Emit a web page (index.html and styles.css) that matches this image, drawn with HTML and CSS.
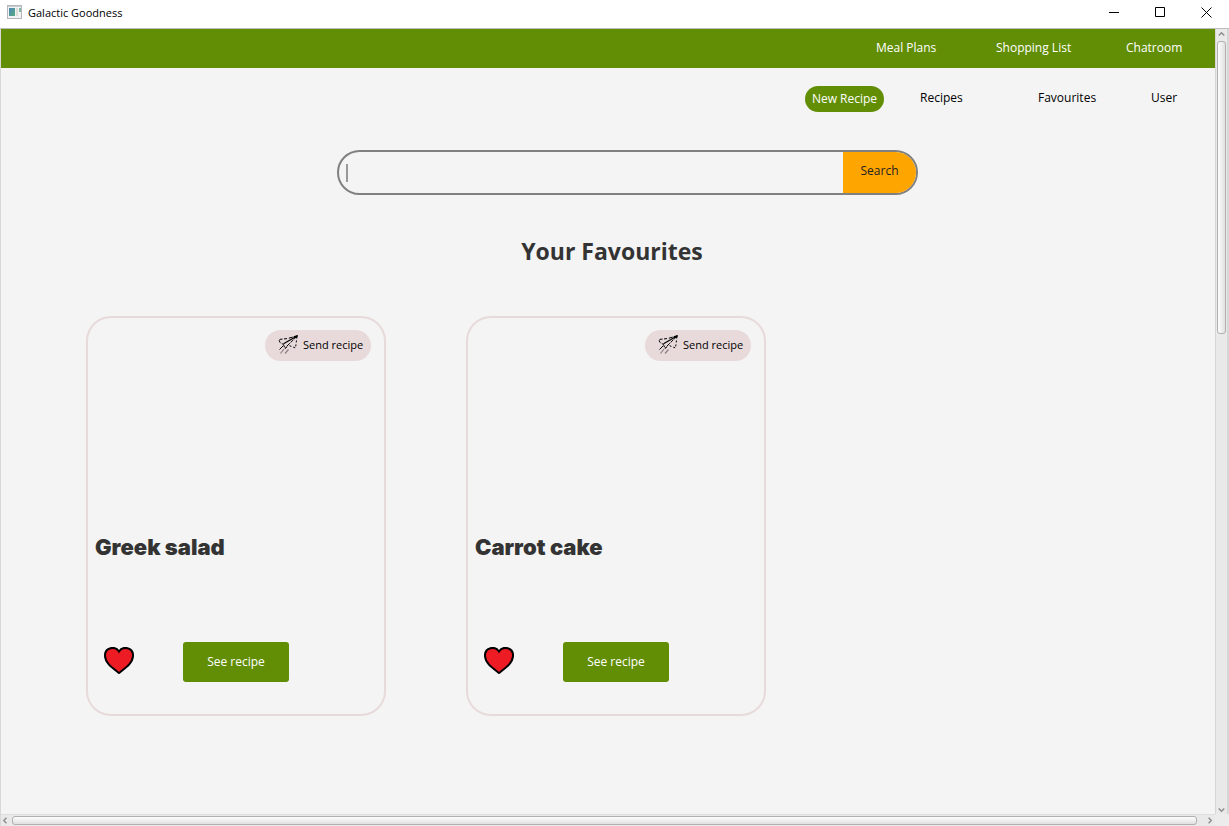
FILE: index.html
```html
<!DOCTYPE html>
<html lang="en">
<head>
<meta charset="utf-8">
<title>Galactic Goodness</title>
<link rel="stylesheet" href="styles.css">
</head>
<body>
<svg class="defs" aria-hidden="true">
  <symbol id="plane" viewBox="0 0 20 20">
    <g fill="none" stroke="#000" stroke-width="1">
      <path d="M19.500 .8L10 3.400" stroke-dasharray="4 1"/>
      <path d="M9 3.600L.8 4.500L2 7.500L5.500 9.500" stroke-dasharray="3 1.500"/>
      <path d="M19.500 .8L5.500 8.800" stroke-width="1.200"/>
      <path d="M5.500 9.500L7 13.500L10 11" stroke-dasharray="3 1"/>
      <path d="M19 1.200L7.500 12.500" stroke-dasharray="4 1"/>
      <path d="M19 1.500L17.500 13L11 10.500" stroke-dasharray="2 2"/>
      <path d="M5 11L1.500 14.500"/>
    </g>
    <path d="M15.500 1.200L19.800 .3L18.500 3.200Z"/>
    <path d="M6 14L2.500 18.500M10.500 14.500L7 18.500" fill="none" stroke="#8d7f82" stroke-width="1.200"/>
  </symbol>
  <symbol id="heart" viewBox="0 0 30 27">
    <path d="M15 4.500C12.500 .5 8.500 .7 6.500 1.200C2.500 2.200 .8 5.500 1 9C1.300 16 8 20.500 15 26C22 20.500 28.700 16 29 9C29.200 5.500 27.500 2.200 23.500 1.200C21.500 .7 17.500 .5 15 4.500Z" fill="#ed1c24" stroke="#000" stroke-width="2"/>
  </symbol>
</svg>

<header class="titlebar">
  <svg class="app-icon" viewBox="0 0 15 14" aria-hidden="true">
    <defs><linearGradient id="pane" x2="1" y2="1"><stop stop-color="#4b86b4"/><stop offset="1" stop-color="#58ab82"/></linearGradient></defs>
    <rect x=".5" y=".5" width="14" height="13" fill="#f2f2f2" stroke="#b4b8be"/>
    <rect x="1" y="1" width="13" height="1" fill="#c9cdd2"/>
    <rect x="2" y="3" width="6" height="8" fill="url(#pane)"/>
    <rect x="9" y="3" width="2" height="8" fill="#dcdcdc"/>
    <rect x="12" y="3" width="2" height="4" fill="#86b9a4"/>
  </svg>
  <span class="window-title">Galactic Goodness</span>
  <div class="window-controls">
    <button class="window-button" aria-label="Minimize"><svg viewBox="0 0 11 11"><path d="M0 5.500H10"/></svg></button>
    <button class="window-button" aria-label="Maximize"><svg viewBox="0 0 11 11"><path d="M.5 .5H9.500V9.500H.5Z"/></svg></button>
    <button class="window-button" aria-label="Close"><svg viewBox="0 0 11 11"><path d="M.5 .5L10.500 10.500M10.500 .5L.5 10.500"/></svg></button>
  </div>
</header>

<div class="workspace">
  <main class="page">
    <nav class="main-nav" aria-label="Main">
      <a href="#">Meal Plans</a>
      <a href="#">Shopping List</a>
      <a href="#">Chatroom</a>
    </nav>
    <nav class="sub-nav" aria-label="Recipes">
      <button class="new-recipe">New Recipe</button>
      <a href="#">Recipes</a>
      <a href="#">Favourites</a>
      <a href="#">User</a>
    </nav>
    <form class="search">
      <div class="search-field">
        <span class="caret"></span>
        <input class="search-input" type="text" aria-label="Search recipes">
        <button class="search-button" type="button">Search</button>
      </div>
    </form>
    <h1 class="heading">Your Favourites</h1>
    <section class="cards">
      <article class="card">
        <button class="send"><svg class="plane"><use href="#plane"/></svg>Send recipe</button>
        <h2 class="card-title">Greek salad</h2>
        <div class="card-actions">
          <button class="like" aria-label="Favourite"><svg class="heart"><use href="#heart"/></svg></button>
          <button class="see">See recipe</button>
        </div>
      </article>
      <article class="card">
        <button class="send"><svg class="plane"><use href="#plane"/></svg>Send recipe</button>
        <h2 class="card-title">Carrot cake</h2>
        <div class="card-actions">
          <button class="like" aria-label="Favourite"><svg class="heart"><use href="#heart"/></svg></button>
          <button class="see">See recipe</button>
        </div>
      </article>
    </section>
  </main>
  <div class="scroll scroll-y">
    <svg class="arrow" viewBox="0 0 12 12"><path d="M3 7L6 4L9 7"/></svg>
    <div class="track"><div class="thumb"></div></div>
    <svg class="arrow" viewBox="0 0 12 12"><path d="M3 6L6 9L9 6"/></svg>
  </div>
  <div class="scroll scroll-x">
    <svg class="arrow" viewBox="0 0 12 12"><path d="M6 3L3 6L6 9"/></svg>
    <div class="track"><div class="thumb"></div></div>
    <svg class="arrow" viewBox="0 0 12 12"><path d="M5 3L8 6L5 9"/></svg>
  </div>
  <div class="corner"></div>
</div>
</body>
</html>
```
FILE: styles.css
```css
* {
  box-sizing: border-box;
}

body {
  margin: 0;
  min-height: 100vh;
  display: flex;
  flex-direction: column;
  background: #f4f4f4;
  color: #000;
  font: 12px/16px "Open Sans", "Noto Sans", sans-serif;
}

button,
input {
  font: inherit;
  color: inherit;
  border: 0;
  padding: 0;
  background: none;
}

a {
  color: inherit;
  text-decoration: none;
}

.defs {
  display: none;
}

.titlebar {
  display: flex;
  align-items: center;
  height: 29px;
  padding: 0 0 4px 7px;
  background: #fff;
  border-bottom: 1px solid #bcbcbc;
}

.app-icon {
  width: 15px;
  height: 14px;
  margin-right: 6px;
}

.window-title {
  padding-top: 1px;
  font-size: 11px;
}

.window-controls {
  display: flex;
  margin-left: auto;
}

.window-button {
  display: grid;
  place-items: center;
  width: 46px;
  height: 24px;
}

.window-button svg {
  width: 11px;
  height: 11px;
  fill: none;
  stroke: #000;
}

.workspace {
  flex: 1;
  display: grid;
  grid-template-columns: 1fr 14px;
  grid-template-rows: 1fr 12px;
  border-left: 1px solid #d8d8d8;
}

.page {
  padding-bottom: 48px;
}

.main-nav {
  display: grid;
  grid-template-columns: 120px 130px 89px;
  justify-content: end;
  align-items: center;
  height: 39px;
  padding-bottom: 2px;
  background: #628e06;
  color: #fff;
}

.sub-nav {
  display: grid;
  grid-template-columns: 115px 118px 113px 64px;
  justify-content: end;
  align-items: center;
  margin-top: 18px;
}

.sub-nav a {
  padding-bottom: 2px;
}

.new-recipe {
  justify-self: start;
  width: 79px;
  height: 26px;
  border-radius: 13px;
  background: #628e06;
  color: #fff;
}

.search {
  display: flex;
  justify-content: center;
  padding: 38px 0 0 39px;
}

.search-field {
  display: flex;
  align-items: center;
  width: 581px;
  height: 45px;
  border: 2px solid #808080;
  border-radius: 23px;
  overflow: hidden;
}

.caret {
  width: 2px;
  height: 18px;
  margin-left: 7px;
  background: #999;
}

.search-input {
  flex: 1;
  min-width: 0;
  height: 100%;
  font-size: 14px;
  outline: 0;
}

.search-button {
  width: 73px;
  height: 100%;
  padding-bottom: 4px;
  background: #ffa500;
  font-size: 12px;
  color: #222;
}

.heading {
  margin: 40px 0 0;
  padding-left: 8px;
  text-align: center;
  font-size: 23px;
  line-height: 32px;
  color: #333;
}

.cards {
  display: flex;
  flex-wrap: wrap;
  gap: 80px;
  padding: 49px 0 0 85px;
}

.card {
  display: flex;
  flex-direction: column;
  width: 300px;
  height: 400px;
  padding: 12px 13px 32px 7px;
  border: 2px solid #e8dadb;
  border-radius: 25px;
}

.send {
  align-self: flex-end;
  display: flex;
  align-items: center;
  gap: 5px;
  width: 106px;
  height: 31px;
  padding: 0 0 1px 13px;
  border-radius: 16px;
  background: #e8dadb;
  font-size: 11px;
  white-space: nowrap;
}

.plane {
  flex: none;
  width: 20px;
  height: 20px;
}

.card-title {
  margin: auto 0 80px;
  font: 900 22px/30px Inter, "Liberation Sans", sans-serif;
  color: #333;
}

.card-actions {
  display: flex;
  align-items: center;
  gap: 49px;
  padding-left: 9px;
}

.like {
  padding-bottom: 3px;
}

.heart {
  display: block;
  width: 30px;
  height: 27px;
}

.see {
  width: 106px;
  height: 40px;
  border-radius: 3px;
  background: #628e06;
  color: #fff;
}

.scroll {
  display: flex;
  background: #e9e9e9;
}

.scroll-y {
  flex-direction: column;
  border-left: 1px solid #d6d6d6;
  border-right: 2px solid #d6d6d6;
}

.scroll-x {
  border-top: 1px solid #dedede;
}

.arrow {
  flex: none;
  width: 11px;
  height: 11px;
  fill: none;
  stroke: #8c8c8c;
  stroke-width: 1.5;
}

.track {
  flex: 1;
  display: flex;
  padding: 1px;
}

.scroll-x .track {
  padding: 1px 0;
}

.thumb {
  border: 1px solid #b0b0b0;
  border-radius: 3px;
}

.scroll-y .thumb {
  width: 9px;
  height: 293px;
  background: linear-gradient(to right, #fdfdfd, #e0e0e0);
}

.scroll-x .thumb {
  width: calc(100% - 7px);
  height: 9px;
  background: linear-gradient(#fdfdfd, #e0e0e0);
}

.corner {
  background: #ececec;
}
```
